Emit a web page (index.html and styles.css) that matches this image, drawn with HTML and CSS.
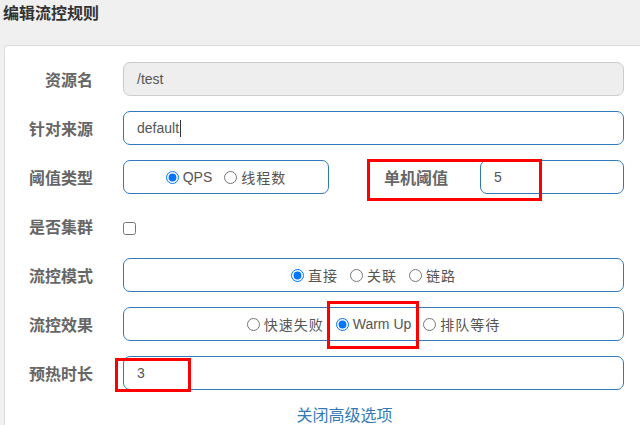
FILE: index.html
```html
<!DOCTYPE html>
<html lang="zh">
<head>
<meta charset="utf-8">
<title>编辑流控规则</title>
<link rel="stylesheet" href="styles.css">
</head>
<body>
<div class="page">
  <h4 class="title">编辑流控规则</h4>
  <div class="card">
    <div class="form">
      <div class="lbl">资源名</div>
      <div class="field disabled">/test</div>

      <div class="lbl">针对来源</div>
      <div class="field">default<span class="caret"></span></div>

      <div class="lbl">阈值类型</div>
      <div class="split">
        <div class="box radios narrow">
          <label class="opt"><input type="radio" name="grade" checked><span>QPS</span></label>
          <label class="opt"><input type="radio" name="grade"><span class="zh">线程数</span></label>
        </div>
        <div class="lbl inline">单机阈值</div>
        <div class="field grow">5</div>
      </div>

      <div class="lbl">是否集群</div>
      <div class="check"><input type="checkbox"></div>

      <div class="lbl">流控模式</div>
      <div class="box radios">
        <label class="opt"><input type="radio" name="mode" checked><span class="zh">直接</span></label>
        <label class="opt"><input type="radio" name="mode"><span class="zh">关联</span></label>
        <label class="opt"><input type="radio" name="mode"><span class="zh">链路</span></label>
      </div>

      <div class="lbl">流控效果</div>
      <div class="box radios">
        <label class="opt"><input type="radio" name="effect"><span class="zh">快速失败</span></label>
        <label class="opt"><input type="radio" name="effect" checked><span>Warm Up</span></label>
        <label class="opt"><input type="radio" name="effect"><span class="zh">排队等待</span></label>
      </div>

      <div class="lbl">预热时长</div>
      <div class="field">3</div>
    </div>
    <div class="more"><a href="#">关闭高级选项</a></div>
  </div>

  <div class="mark mark-threshold"></div>
  <div class="mark mark-warm"></div>
  <div class="mark mark-time"></div>
</div>
</body>
</html>
```

FILE: styles.css
```css
* { box-sizing: border-box; }

html, body {
  margin: 0;
  padding: 0;
  background: #f0f0f0;
  overflow: hidden;
  width: 640px;
  height: 425px;
}

body {
  font-family: "Liberation Sans", "Noto Sans CJK SC", sans-serif;
  font-size: 14px;
  color: #555;
}

.page {
  position: relative;
  width: 640px;
  height: 425px;
  overflow: hidden;
}

.title {
  margin: 0;
  padding: 0 3px;
  height: 45px;
  line-height: 24px;
  font-size: 16px;
  font-weight: 700;
  color: #333;
  font-family: "Noto Sans CJK SC", sans-serif;
}

.card {
  margin-left: 4px;
  width: 636px;
  height: 380px;
  background: #fff;
  border: 1px solid #dcdcdc;
  border-right: none;
  border-bottom: none;
  border-radius: 4px 0 0 0;
  padding-top: 16px;
}

.form {
  display: grid;
  grid-template-columns: 88px 501px;
  grid-auto-rows: 34px;
  column-gap: 30px;
  row-gap: 15px;
}

.lbl {
  display: flex;
  align-items: center;
  justify-content: flex-end;
  font-family: "Noto Sans CJK SC", sans-serif;
  font-size: 16px;
  font-weight: 700;
  color: #666;
}

.lbl.inline {
  justify-content: flex-start;
  margin-left: 55px;
  width: 64px;
  flex: none;
}

.field {
  display: flex;
  align-items: center;
  height: 34px;
  padding-left: 13px;
  border: 1px solid #3479bb;
  border-radius: 7px;
  background: #fff;
  color: #555;
  font-size: 14px;
}

.field.disabled {
  background: #eee;
  border-color: #ccc;
}

.caret {
  display: inline-block;
  width: 1px;
  height: 17px;
  background: #333;
  margin-left: 1px;
}

.split {
  display: flex;
  align-items: center;
}

.box {
  height: 34px;
  border: 1px solid #3479bb;
  border-radius: 7px;
  background: #fff;
}

.box.narrow {
  width: 206px;
  flex: none;
}

.field.grow {
  flex: 1;
  margin-left: 32px;
}

.radios {
  display: flex;
  align-items: center;
  justify-content: center;
  gap: 12px;
}

.opt {
  display: flex;
  align-items: center;
  gap: 4px;
  color: #555;
  font-size: 14px;
  cursor: pointer;
}

.opt input {
  margin: 0;
  width: 13px;
  height: 13px;
}

.zh {
  font-family: "Noto Sans CJK SC", sans-serif;
  letter-spacing: 1px;
}

.check {
  display: flex;
  align-items: center;
  padding-top: 5px;
}

.check input {
  margin: 0;
  width: 13px;
  height: 13px;
}

.more {
  margin-top: 15px;
  padding-left: 44px;
  text-align: center;
  display: flex;
  justify-content: center;
}

.more a {
  display: block;
  height: 19px;
  line-height: 19px;
  overflow: hidden;
  color: #337ab7;
  text-decoration: none;
  font-family: "Noto Sans CJK SC", sans-serif;
  font-size: 16px;
}

.mark {
  position: absolute;
  border: 3px solid #ff0000;
  pointer-events: none;
}

.mark-threshold {
  left: 367px;
  top: 159px;
  width: 175px;
  height: 42px;
}

.mark-warm {
  left: 327px;
  top: 301px;
  width: 92px;
  height: 48px;
}

.mark-time {
  left: 115px;
  top: 358px;
  width: 76px;
  height: 34px;
}
```
